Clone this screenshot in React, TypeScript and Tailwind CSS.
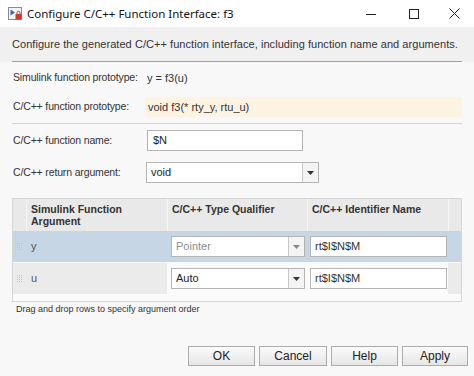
import React from "react";

const font = { fontFamily: '"Liberation Sans", Arial, sans-serif' };

function TitleIcon() {
  return (
    <svg width="15" height="15" viewBox="0 0 15 15">
      <rect x="0.5" y="1.5" width="13" height="12" fill="#f4f4f4" stroke="#8a8a8a" />
      <path d="M2.5 3.5 L7 6.5 L2.5 9.5 Z" fill="#2b6fb7" />
      <rect x="7.5" y="8" width="6" height="5.5" fill="#d9342b" />
      <path d="M9 8 V6.8 A1.5 1.5 0 0 1 12 6.8 V8" fill="none" stroke="#d9342b" strokeWidth="1" />
    </svg>
  );
}

function WindowControls() {
  return (
    <div className="flex items-center h-full">
      <div className="w-[46px] h-full flex items-center justify-center">
        <svg width="10" height="10" viewBox="0 0 10 10">
          <path d="M0 5.5 H10" stroke="#222" strokeWidth="1" />
        </svg>
      </div>
      <div className="w-[40px] h-full flex items-center justify-center">
        <svg width="10" height="10" viewBox="0 0 10 10">
          <rect x="0.5" y="0.5" width="9" height="9" fill="none" stroke="#222" strokeWidth="1" />
        </svg>
      </div>
      <div className="w-[40px] h-full flex items-center justify-center">
        <svg width="11" height="11" viewBox="0 0 11 11">
          <path d="M0.5 0.5 L10.5 10.5 M10.5 0.5 L0.5 10.5" stroke="#222" strokeWidth="1" />
        </svg>
      </div>
    </div>
  );
}

function Arrow({ color = "#333" }: { color?: string }) {
  return (
    <svg width="7" height="4" viewBox="0 0 7 4">
      <path d="M0 0 H7 L3.5 4 Z" fill={color} />
    </svg>
  );
}

function Select({ value, width, disabled }: { value: string; width: string; disabled?: boolean }) {
  return (
    <div className={`flex h-[21px] ${width} border border-[#b4b4b4] bg-white`}>
      <div className={`flex-1 flex items-center pl-[4px] text-[11px] ${disabled ? "text-[#8c8c8c]" : "text-[#222]"}`}>
        {value}
      </div>
      <div className="w-[16px] flex items-center justify-center border-l border-[#c8c8c8] bg-[#f4f4f4]">
        <Arrow color={disabled ? "#888" : "#333"} />
      </div>
    </div>
  );
}

function Handle({ faint }: { faint?: boolean }) {
  const c = faint ? "#b5c6d6" : "#c4c4c4";
  return (
    <svg width="6" height="8" viewBox="0 0 6 8">
      {[0, 1, 2, 3].map((r) =>
        [0, 1, 2].map((k) => <rect key={`${r}-${k}`} x={k * 2} y={r * 2} width="1" height="1" fill={c} />)
      )}
    </svg>
  );
}

function Label({ children }: { children: React.ReactNode }) {
  return (
    <div className="w-[134px] shrink-0 text-[10.5px] tracking-[-0.15px] text-[#333] whitespace-nowrap">{children}</div>
  );
}

function Button({ children, w }: { children: React.ReactNode; w: string }) {
  return (
    <div
      className={`${w} h-[20px] flex items-center justify-center border border-[#acacac] bg-gradient-to-b from-[#fbfbfb] to-[#e6e6e6] text-[12px] text-[#222]`}
    >
      {children}
    </div>
  );
}

export default function App() {
  return (
    <div className="w-[474px] h-[376px] bg-[#f8f8f8] flex flex-col overflow-hidden" style={font}>
      {/* title bar */}
      <div className="h-[27px] bg-white flex items-center justify-between shrink-0">
        <div className="flex items-center pl-[8px] gap-[4px]">
          <TitleIcon />
          <span className="text-[11.5px] text-[#111]" style={{ fontFamily: '"Noto Sans", "Open Sans", sans-serif' }}>
            Configure C/C++ Function Interface: f3
          </span>
        </div>
        <WindowControls />
      </div>

      {/* description */}
      <div className="bg-[#f0f0f0] px-[12px] shrink-0">
        <div className="h-[35px] flex items-center border-b border-[#a0a0a0] text-[11px] tracking-[0.05px] text-[#333] whitespace-nowrap">
          Configure the generated C/C++ function interface, including function name and arguments.
        </div>
      </div>

      {/* prototype rows */}
      <div className="px-[12px] flex flex-col shrink-0">
        <div className="h-[20px] mt-[6px] flex items-center pl-[1px]">
          <Label>Simulink function prototype:</Label>
          <div className="text-[11px] text-[#333]">y = f3(u)</div>
        </div>
        <div className="h-[20px] mt-[9px] flex items-center pl-[1px]">
          <Label>C/C++ function prototype:</Label>
          <div className="flex-1 h-full -ml-[2px] pl-[3px] bg-[#fdf3e2] flex items-center text-[11px] text-[#333]">
            void f3(* rty_y, rtu_u)
          </div>
        </div>
        <div className="mt-[6px] border-b border-[#d4d4d4]" />
        <div className="h-[21px] mt-[6px] flex items-center pl-[1px]">
          <Label>C/C++ function name:</Label>
          <div className="w-[156px] h-full border border-[#b4b4b4] bg-white flex items-center pl-[5px] text-[11px] text-[#222]">
            $N
          </div>
        </div>
        <div className="h-[21px] mt-[11px] flex items-center pl-[1px]">
          <Label>C/C++ return argument:</Label>
          <div className="-ml-[1px]">
            <Select value="void" width="w-[173px]" />
          </div>
        </div>
      </div>

      {/* argument table */}
      <div className="mx-[12px] mt-[15px] h-[104px] border border-[#d6d6d6] bg-[#fbfbfb] shrink-0">
        <div className="grid grid-cols-[13px_141px_140px_141px_1fr] h-[32px] bg-[#e9e9e9] text-[10.5px] text-[#333] font-bold leading-[12px]">
          <div />
          <div className="border-l border-[#f6f6f6] pl-[4px] pt-[4px]">
            Simulink Function
            <br />
            Argument
          </div>
          <div className="border-l border-[#f6f6f6] pl-[4px] pt-[4px]">C/C++ Type Qualifier</div>
          <div className="border-l border-[#f6f6f6] pl-[4px] pt-[4px]">C/C++ Identifier Name</div>
          <div className="border-l border-[#f6f6f6]" />
        </div>
        <div className="grid grid-cols-[13px_141px_140px_141px] h-[31px] bg-[#c6d6e5] items-center">
          <div className="flex justify-center">
            <Handle faint />
          </div>
          <div className="pl-[5px] text-[11px] text-[#555]">y</div>
          <div className="pl-[4px]">
            <Select value="Pointer" width="w-[134px]" disabled />
          </div>
          <div className="pl-[3px]">
            <div className="w-[137px] h-[21px] border border-[#b4b4b4] bg-white flex items-center pl-[4px] text-[11px] text-[#333]">
              rt$I$N$M
            </div>
          </div>
        </div>
        <div className="grid grid-cols-[13px_141px_140px_141px] h-[32px] bg-[#ebebeb] items-center border-t border-[#fafafa]">
          <div className="flex justify-center">
            <Handle />
          </div>
          <div className="pl-[5px] text-[11px] text-[#555]">u</div>
          <div className="pl-[4px] bg-[#fbfbfb] h-full flex items-center">
            <Select value="Auto" width="w-[134px]" />
          </div>
          <div className="pl-[3px] bg-[#fbfbfb] h-full flex items-center">
            <div className="w-[137px] h-[21px] border border-[#b4b4b4] bg-white flex items-center pl-[4px] text-[11px] text-[#333]">
              rt$I$N$M
            </div>
          </div>
        </div>
      </div>
      <div className="px-[16px] mt-[1px] text-[9px] text-[#333] shrink-0">Drag and drop rows to specify argument order</div>

      {/* buttons */}
      <div className="flex justify-end gap-[4px] pr-[6px] mt-[29px] shrink-0">
        <Button w="w-[67px]">OK</Button>
        <Button w="w-[68px]">Cancel</Button>
        <Button w="w-[67px]">Help</Button>
        <Button w="w-[66px]">Apply</Button>
      </div>
    </div>
  );
}
